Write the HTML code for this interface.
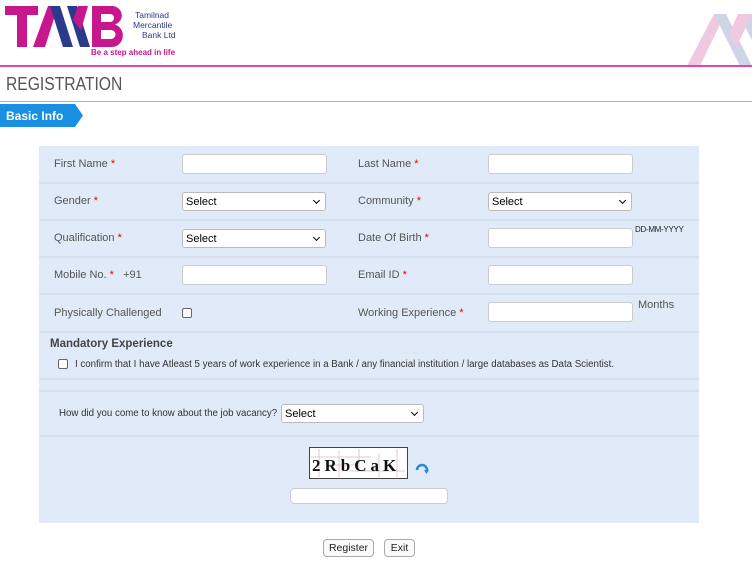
<!DOCTYPE html>
<html><head><style>
*{margin:0;padding:0;box-sizing:border-box}
body{width:752px;height:565px;background:#fff;font-family:"Liberation Sans",sans-serif;position:relative;overflow:hidden}
.abs{position:absolute}
.lbl{position:absolute;font-size:11px;color:#555;font-family:"Liberation Sans",sans-serif}
.lbl b{color:#e00;font-weight:normal}
.inp{position:absolute;width:145px;height:20px;background:#fff;border:1px solid #ccc;border-radius:3px}
.sel{position:absolute;width:144px;height:19px;background:#fff;border:1px solid #bbb;border-radius:3px;font-size:11px;color:#000;padding:3px 3px}
.sel:after{content:"";position:absolute;right:6px;top:5px;width:4px;height:4px;border-right:1.5px solid #000;border-bottom:1.5px solid #000;transform:rotate(45deg)}
.hl{position:absolute;left:39px;width:660px;height:2px;background:#d6e0ee}
.cb{position:absolute;width:10px;height:10px;border:1px solid #666;border-radius:2px;background:#fff}
.btn{position:absolute;height:18px;border:1px solid #aaa;border-radius:4px;background:#fafafa;font-size:10.5px;text-align:center;line-height:16px;color:#222}
</style></head><body>
<svg class="abs" style="left:0;top:0" width="200" height="62">
<polygon points="5,6 38,6 38,15 27,15 27,47 17,47 17,15 5,15" fill="#c8168c"/>
<polygon points="33,47 48,6 58,6 45,47" fill="#c8168c"/>
<polygon points="50,6 60,6 73,47 63,47" fill="#2c3a8c"/>
<polygon points="67,6 77,6 90,47 80,47" fill="#2c3a8c"/>
<polygon points="73,20 78,6 88,6 81,30" fill="#c8168c"/>
<path d="M92,6 h20 a10,9.5 0 0 1 3,18.5 a11,11.5 0 0 1 -3,22.5 h-20z M101,14 v8 h9 a4,4 0 0 0 0,-8z M101,30 v9 h10 a4.5,4.5 0 0 0 0,-9z" fill="#c8168c" fill-rule="evenodd"/>
<text x="135" y="18" font-size="8.5" fill="#2c3a8c" font-family="Liberation Sans">Tamilnad</text>
<text x="133" y="28" font-size="8.5" fill="#2c3a8c" font-family="Liberation Sans">Mercantile</text>
<text x="142" y="38" font-size="8.5" fill="#2c3a8c" font-family="Liberation Sans">Bank Ltd</text>
<text x="91" y="55" font-size="8" fill="#c8168c" font-family="Liberation Sans" font-weight="bold">Be a step ahead in life</text>
</svg>
<svg class="abs" style="left:660px;top:0" width="92" height="66">
<polygon points="27,66 54,14 65,14 40,66" fill="#f0c8e0"/>
<polygon points="54,14 66,14 92,66 80,66" fill="#cdd5e6"/>
<polygon points="78,14 92,14 92,40" fill="#cdd5e6"/>
<polygon points="69,34 78,14 92,14 76,48" fill="#f0c8e0"/>
</svg>
<div class="abs" style="left:0;top:65px;width:752px;height:2px;background:#e048ac"></div>
<div class="abs" style="left:6px;top:74px;font-size:18px;color:#555;transform:scaleX(0.87);transform-origin:0 0">REGISTRATION</div>
<div class="abs" style="left:0;top:101px;width:752px;height:1px;background:#a8b0c8"></div>
<svg class="abs" style="left:0;top:104px" width="84" height="23"><polygon points="0,0 75,0 83,11.5 75,23 0,23" fill="#1a90e2"/><text x="6" y="16" font-size="12" font-weight="bold" fill="#fff" font-family="Liberation Sans">Basic Info</text></svg>
<div class="abs" style="left:39px;top:146px;width:660px;height:377px;background:#e1eaf9"></div>
<div class="hl" style="top:182px"></div>
<div class="hl" style="top:219px"></div>
<div class="hl" style="top:256px"></div>
<div class="hl" style="top:293px"></div>
<div class="hl" style="top:331px"></div>
<div class="hl" style="top:378px"></div>
<div class="hl" style="top:390px"></div>
<div class="hl" style="top:435px"></div>

<div class="lbl" style="left:54px;top:158px">First Name <b>*</b></div>
<div class="inp" style="left:182px;top:154px"></div>
<div class="lbl" style="left:358px;top:158px">Last Name <b>*</b></div>
<div class="inp" style="left:488px;top:154px"></div>

<div class="lbl" style="left:54px;top:195px">Gender <b>*</b></div>
<div class="sel" style="left:182px;top:192px">Select</div>
<div class="lbl" style="left:358px;top:195px">Community <b>*</b></div>
<div class="sel" style="left:488px;top:192px">Select</div>

<div class="lbl" style="left:54px;top:232px">Qualification <b>*</b></div>
<div class="sel" style="left:182px;top:229px">Select</div>
<div class="lbl" style="left:358px;top:232px">Date Of Birth <b>*</b></div>
<div class="inp" style="left:488px;top:228px"></div>
<div class="abs" style="left:635px;top:225px;font-size:8px;color:#222;letter-spacing:-0.3px">DD-MM-YYYY</div>

<div class="lbl" style="left:54px;top:269px">Mobile No. <b>*</b>&nbsp;&nbsp; +91</div>
<div class="inp" style="left:182px;top:265px"></div>
<div class="lbl" style="left:358px;top:269px">Email ID <b>*</b></div>
<div class="inp" style="left:488px;top:265px"></div>

<div class="lbl" style="left:54px;top:307px">Physically Challenged</div>
<div class="cb" style="left:182px;top:308px"></div>
<div class="lbl" style="left:358px;top:307px">Working Experience <b>*</b></div>
<div class="inp" style="left:488px;top:302px"></div>
<div class="lbl" style="left:638px;top:299px">Months</div>

<div class="abs" style="left:50px;top:338px;font-size:11.5px;font-weight:bold;color:#444">Mandatory Experience</div>
<div class="cb" style="left:58px;top:359px"></div>
<div class="lbl" style="left:75px;top:359px;font-size:9.7px;color:#333">I confirm that I have Atleast 5 years of work experience in a Bank / any financial institution / large databases as Data Scientist.</div>

<div class="lbl" style="left:59px;top:408px;font-size:9.7px;color:#333">How did you come to know about the job vacancy?</div>
<div class="sel" style="left:281px;top:404px;width:143px">Select</div>

<svg class="abs" style="left:309px;top:447px" width="100" height="32">
<rect x="0.5" y="0.5" width="98" height="31" fill="#fff" stroke="#444"/>
<g stroke="#e0c8c8" stroke-width="1" fill="none"><path d="M10,2 v28 M30,4 v26 M50,2 v20 M70,6 v24 M88,2 v28 M2,10 h60 M40,24 h56 M20,18 h30"/></g>
<text x="3" y="24" font-size="17" font-weight="bold" font-family="Liberation Serif" fill="#111" letter-spacing="4">2RbCaK</text>
</svg>
<svg class="abs" style="left:414px;top:461px" width="16" height="16"><path d="M3,9 a5,5 0 1 1 10,0" stroke="#2a8ad0" stroke-width="2.5" fill="none"/><polygon points="10,9 15,9 12.5,13" fill="#2a8ad0"/></svg>
<div class="inp" style="left:290px;top:488px;width:158px;height:16px;border-radius:4px"></div>

<div class="btn" style="left:323px;top:539px;width:51px">Register</div>
<div class="btn" style="left:384px;top:539px;width:31px">Exit</div>
</body></html>
